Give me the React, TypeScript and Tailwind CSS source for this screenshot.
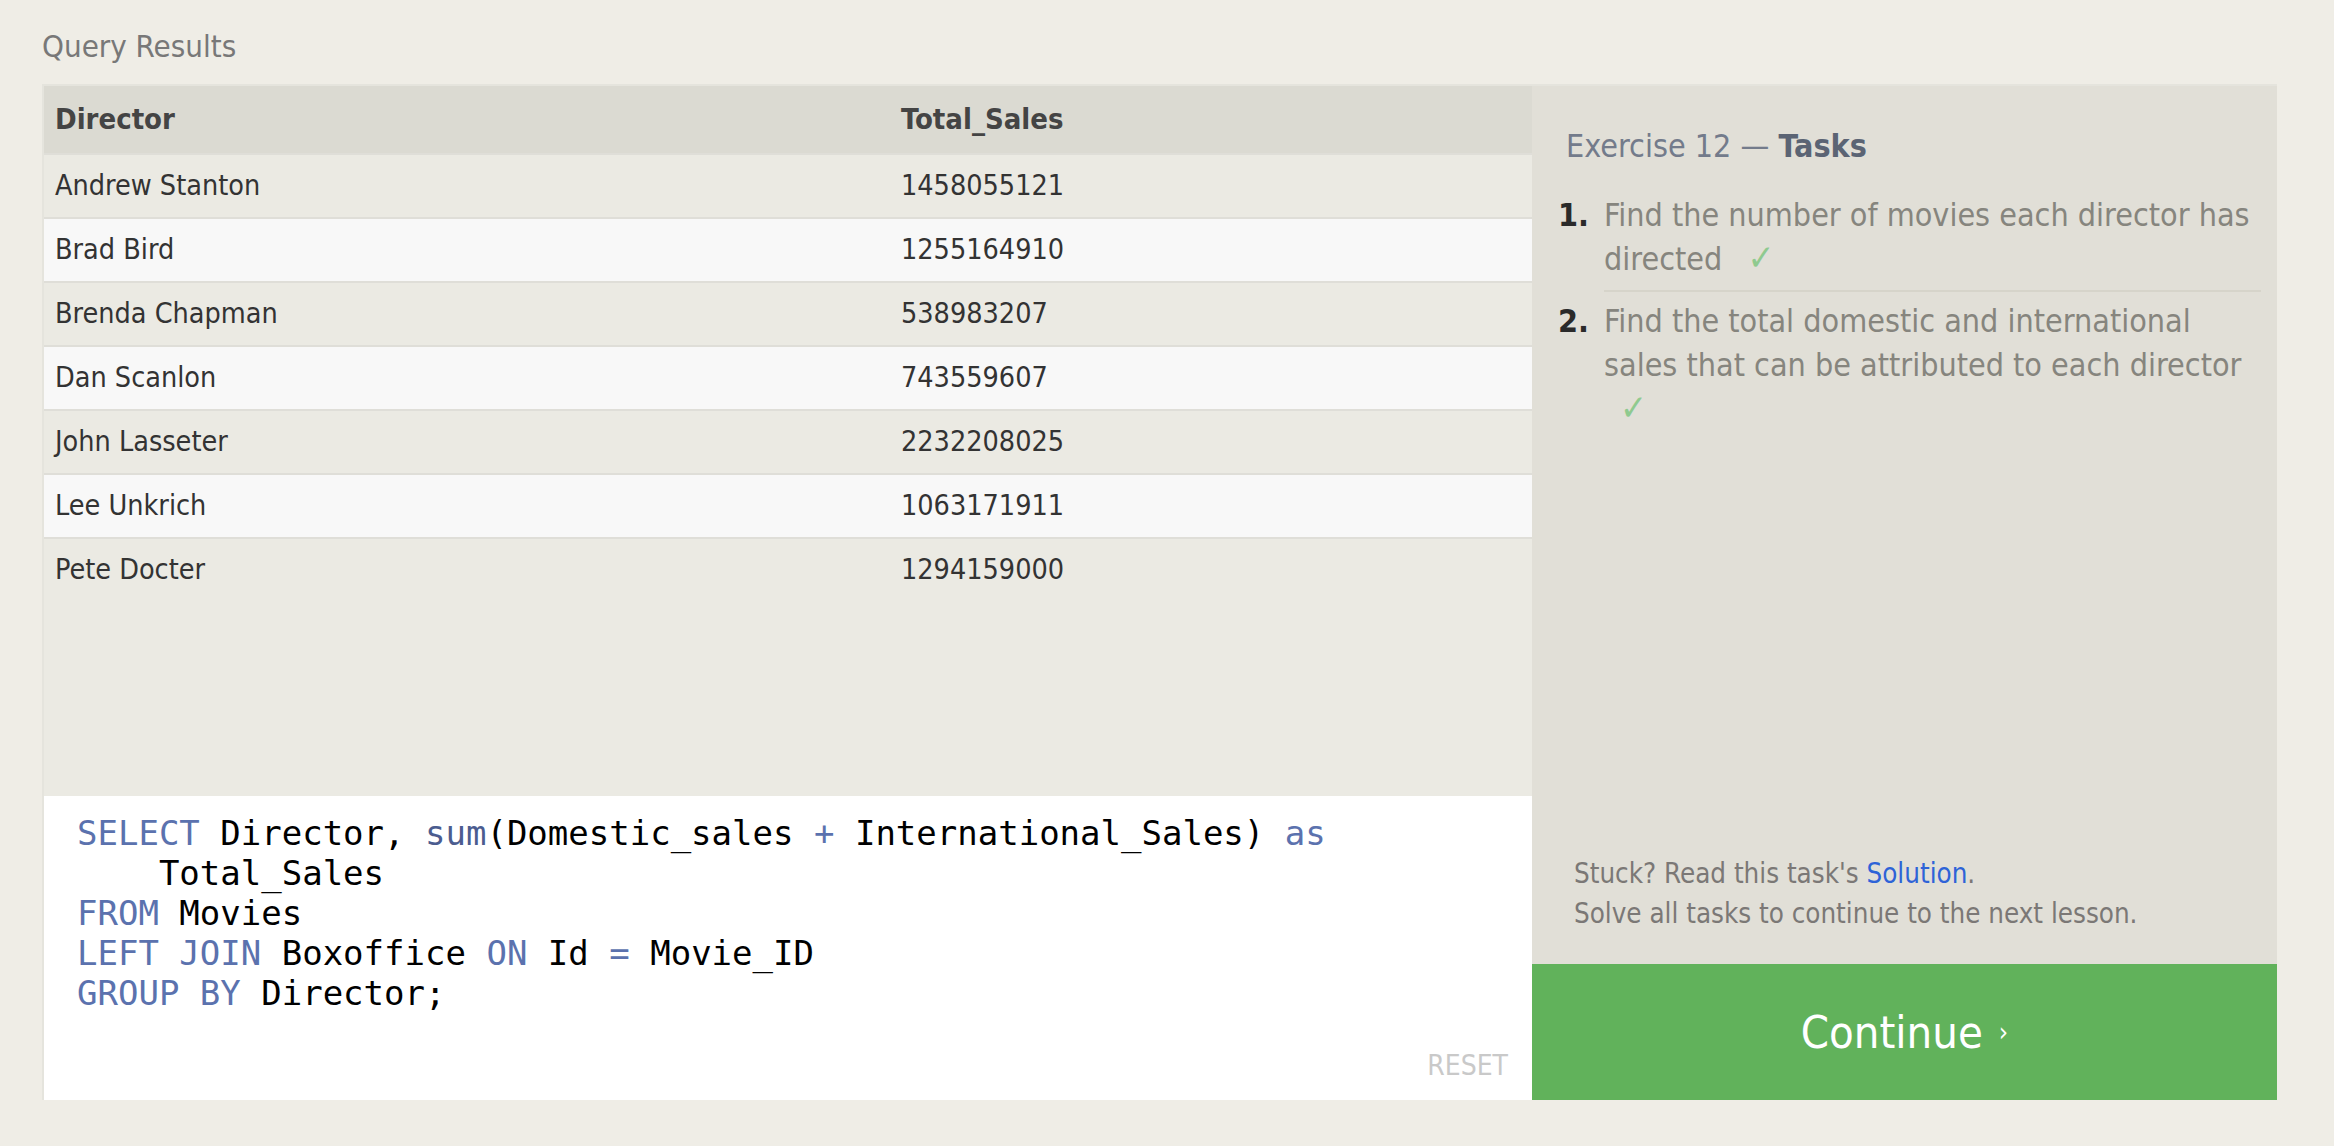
import React from "react";

const rows: [string, string][] = [
  ["Andrew Stanton", "1458055121"],
  ["Brad Bird", "1255164910"],
  ["Brenda Chapman", "538983207"],
  ["Dan Scanlon", "743559607"],
  ["John Lasseter", "2232208025"],
  ["Lee Unkrich", "1063171911"],
  ["Pete Docter", "1294159000"],
];

const Kw: React.FC<{ children: React.ReactNode }> = ({ children }) => (
  <span className="text-[#5b72ae]">{children}</span>
);

const Check = () => <span className="ml-[16px] text-[36px] leading-none text-[#8fca8f]">✓</span>;

export default function App() {
  return (
    <div className="min-h-screen bg-[#efede6] pl-[42px] pt-[28px] font-['DejaVu_Sans_Condensed','DejaVu_Sans',sans-serif] font-stretch-condensed">
      <div className="mb-[20px] text-[31px] leading-[36px] text-[#787878]">Query Results</div>

      <div className="grid w-[2235px] grid-cols-[1488px_745px] border-t-2 border-l-2 border-r border-[#e5e4dd]">
        {/* left: results + editor */}
        <div className="flex flex-col">
          <div className="h-[710px] bg-[#ebeae3] text-[28.5px] leading-[1.2]">
            <div className="flex h-[67px] items-center bg-[#dbdad2] text-[29px] font-bold text-[#444]">
              <div className="w-[846px] pl-[11px]">Director</div>
              <div className="pl-[11px]">Total_Sales</div>
            </div>
            {rows.map(([name, total], i) => (
              <div
                key={name}
                className={`flex h-[64px] items-center border-t-2 border-[#dfded8] text-[#333] ${
                  i % 2 === 0 ? "bg-[#ebeae3]" : "bg-[#f8f8f8]"
                }`}
              >
                <div className="w-[846px] pl-[11px]">{name}</div>
                <div className="pl-[11px]">{total}</div>
              </div>
            ))}
          </div>

          <div className="relative h-[304px] bg-white pl-[33px] pt-[17px] font-['DejaVu_Sans_Mono',monospace] text-[34px] leading-[40px] text-black">
            <pre className="font-['DejaVu_Sans_Mono',monospace] whitespace-pre">
              <Kw>SELECT</Kw> Director, <span className="text-[#4b5c8f]">sum</span>(Domestic_sales <Kw>+</Kw>{" "}
              International_Sales) <Kw>as</Kw>
              {"\n    "}Total_Sales
              {"\n"}
              <Kw>FROM</Kw> Movies
              {"\n"}
              <Kw>LEFT JOIN</Kw> Boxoffice <Kw>ON</Kw> Id <Kw>=</Kw> Movie_ID
              {"\n"}
              <Kw>GROUP BY</Kw> Director;
            </pre>
            <div className="absolute bottom-[18px] right-[24px] font-['DejaVu_Sans_Condensed','DejaVu_Sans',sans-serif] text-[28px] leading-[32px] text-[#c9c9c9]">
              RESET
            </div>
          </div>
        </div>

        {/* right: tasks */}
        <div className="flex flex-col bg-[#e1dfd7]">
          <div className="flex flex-1 flex-col pl-[34px] pr-[16px] pt-[41px]">
            <h3 className="text-[32px] leading-[38px] text-[#737b8b]">
              Exercise 12 — <span className="font-bold text-[#5b6474]">Tasks</span>
            </h3>
            <ol className="mt-[28px] text-[32px] leading-[44px]">
              <li className="flex">
                <span className="-ml-[8px] w-[46px] shrink-0 font-bold text-[#2a2a2a]">1.</span>
                <div className="flex-1 border-b-2 border-[#d6d4ca] pb-[9px] text-[#86857e]">
                  Find the number of movies each director has
                  <br />
                  directed <Check />
                </div>
              </li>
              <li className="flex pt-[7px]">
                <span className="-ml-[8px] w-[46px] shrink-0 font-bold text-[#2a2a2a]">2.</span>
                <div className="flex-1 text-[#86857e]">
                  Find the total domestic and international
                  <br />
                  sales that can be attributed to each director
                  <br />
                  <Check />
                </div>
              </li>
            </ol>
            <div className="mt-auto pb-[31px] pl-[8px] text-[27.5px] leading-[40px] text-[#7b7876]">
              <div>
                Stuck? Read this task's <span className="text-[#2e63d7]">Solution</span>.
              </div>
              <div>Solve all tasks to continue to the next lesson.</div>
            </div>
          </div>
          <div className="flex h-[136px] items-center justify-center bg-[#61b25b] text-white">
            <span className="text-[45px] leading-none">Continue</span>
            <span className="ml-[16px] text-[26px] leading-none">›</span>
          </div>
        </div>
      </div>
    </div>
  );
}
